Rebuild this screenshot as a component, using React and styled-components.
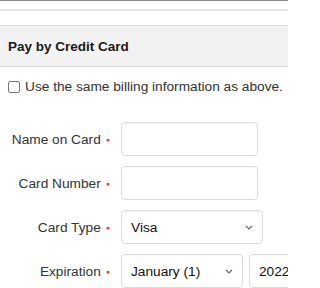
import React from "react";
import styled, { createGlobalStyle } from "styled-components";

const GlobalStyle = createGlobalStyle`
  body {
    margin: 0;
    background: #fff;
    font-family: "Liberation Sans", Arial, sans-serif;
    color: #333;
    overflow: hidden;
  }
`;

const Page = styled.div`
  width: 288px;
  height: 288px;
  overflow: hidden;
`;

const TopEdge = styled.div`
  height: 9px;
  border-top: 1px solid #8a8a8a;
  box-sizing: border-box;
`;

const Divider = styled.div`
  height: 2px;
  background: #e4e4e4;
  margin-bottom: 14px;
`;

const PanelHeader = styled.div`
  height: 42px;
  box-sizing: border-box;
  border-top: 1px solid #dedede;
  border-bottom: 1px solid #d8d8d8;
  background: #f2f2f2;
  display: flex;
  align-items: center;
  padding-left: 8px;
  font-size: 13.5px;
  font-weight: bold;
  color: #1a1a1a;
`;

const CheckRow = styled.label`
  display: flex;
  align-items: center;
  margin: 12px 0 0 8px;
  font-size: 13.7px;
  color: #333;
  white-space: nowrap;
`;

const Box = styled.span`
  width: 10px;
  height: 10px;
  border: 1px solid #777;
  border-radius: 2px;
  margin-right: 5px;
  flex-shrink: 0;
`;

const Form = styled.div`
  display: grid;
  grid-template-columns: 121px 1fr;
  row-gap: 10px;
  margin-top: 28px;
  white-space: nowrap;
`;

const Label = styled.div`
  display: flex;
  align-items: center;
  justify-content: flex-end;
  padding-right: 11px;
  font-size: 13.7px;
  color: #333;
`;

const Req = styled.span`
  color: #e0434b;
  font-size: 7px;
  margin-left: 5px;
`;

const Field = styled.div`
  display: flex;
  gap: 6px;
`;

const Input = styled.div`
  width: ${(p) => p.$w}px;
  height: 34px;
  box-sizing: border-box;
  border: 1px solid #dcdcdc;
  border-radius: 4px;
  box-shadow: inset 0 1px 1px rgba(0, 0, 0, 0.03);
  background: #fff;
  flex-shrink: 0;
`;

const Select = styled(Input)`
  display: flex;
  align-items: center;
  justify-content: space-between;
  padding: 0 9px 0 9px;
  font-size: 13.7px;
  color: #111;
`;

const Chevron = () => (
  <svg width="8" height="5" viewBox="0 0 8 5">
    <path d="M1 1l3 3 3-3" fill="none" stroke="#666" strokeWidth="1.1" />
  </svg>
);

function Row({ label, children }) {
  return (
    <>
      <Label>
        {label}
        <Req>●</Req>
      </Label>
      <Field>{children}</Field>
    </>
  );
}

export default function App() {
  return (
    <Page>
      <GlobalStyle />
      <TopEdge />
      <Divider />
      <PanelHeader>Pay by Credit Card</PanelHeader>
      <CheckRow>
        <Box />
        Use the same billing information as above.
      </CheckRow>
      <Form>
        <Row label="Name on Card">
          <Input $w={137} />
        </Row>
        <Row label="Card Number">
          <Input $w={137} />
        </Row>
        <Row label="Card Type">
          <Select $w={142}>
            Visa
            <Chevron />
          </Select>
        </Row>
        <Row label="Expiration">
          <Select $w={122}>
            January (1)
            <Chevron />
          </Select>
          <Select $w={80}>
            2022
            <Chevron />
          </Select>
        </Row>
      </Form>
    </Page>
  );
}
